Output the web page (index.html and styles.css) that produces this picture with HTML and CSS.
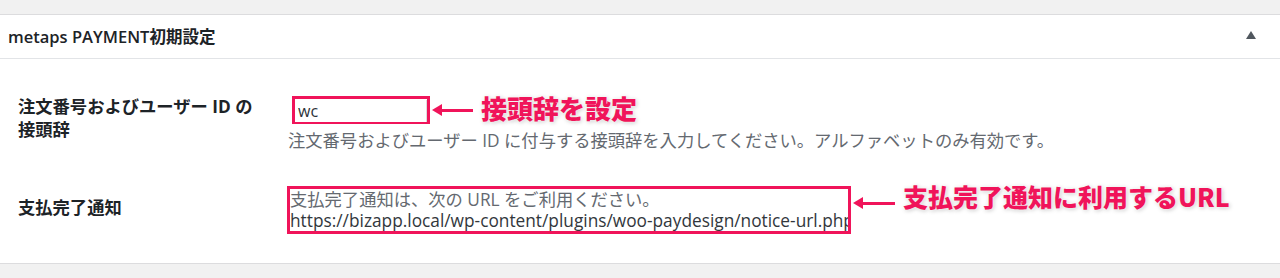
FILE: index.html
```html
<!DOCTYPE html>
<html lang="ja">
<head>
    <meta charset="UTF-8">
    <title>metaps PAYMENT初期設定</title>
    <link rel="stylesheet" href="styles.css">
</head>
<body>
    <div class="postbox">
        <div class="postbox-header">
            <h2>metaps PAYMENT初期設定</h2>
            <span class="toggle"></span>
        </div>
        <div class="inside">
            <div class="row row-prefix">
                <div class="label">注文番号およびユーザー ID の<br>接頭辞</div>
                <div class="field">
                    <div class="line">
                        <div class="mark mark-input">
                            <input type="text" value="wc">
                        </div>
                        <span class="arrow arrow-short"></span>
                        <span class="note note-small">接頭辞を設定</span>
                    </div>
                    <p class="desc">注文番号およびユーザー ID に付与する接頭辞を入力してください。アルファベットのみ有効です。</p>
                </div>
            </div>
            <div class="row row-notice">
                <div class="label">支払完了通知</div>
                <div class="field">
                    <div class="line line-top">
                        <div class="mark mark-text">
                            <p class="desc">支払完了通知は、次の URL をご利用ください。</p>
                            <p class="url">https://bizapp.local/wp-content/plugins/woo-paydesign/notice-url.php</p>
                        </div>
                        <span class="arrow arrow-long"></span>
                        <span class="note note-big">支払完了通知に利用するURL</span>
                    </div>
                </div>
            </div>
        </div>
    </div>
</body>
</html>
```

FILE: styles.css
```css
* {
    box-sizing: border-box;
    margin: 0;
    padding: 0;
}

body {
    background-color: #f1f1f1;
    font-family: "Open Sans", "Noto Sans CJK JP", sans-serif;
    font-size: 17.3px;
    color: #3c434a;
    padding-top: 14px;
}

.postbox {
    background-color: #fff;
    border-top: 1px solid #dcdcde;
    border-bottom: 1px solid #dcdcde;
    box-shadow: 0 1px 1px rgba(0, 0, 0, 0.04);
}

.postbox-header {
    display: flex;
    align-items: center;
    justify-content: space-between;
    height: 44px;
    border-bottom: 1px solid #e2e4e7;
    padding: 0 24px 0 8px;
}

.postbox-header h2 {
    font-size: 16.5px;
    font-weight: 600;
    color: #1d2327;
    margin-top: -2px;
}

.toggle {
    width: 0;
    height: 0;
    border-left: 5px solid transparent;
    border-right: 5px solid transparent;
    border-bottom: 8px solid #50575e;
    margin-top: -4px;
}

.inside {
    padding: 36px 0 0 18px;
    height: 204px;
}

.row {
    display: flex;
}

.label {
    width: 270px;
    font-weight: 700;
    color: #1d2327;
    line-height: 23px;
}

.row-notice {
    margin-top: 35px;
}

.row-notice .label {
    padding-top: 10px;
}

.line {
    display: flex;
    align-items: center;
}

.row-prefix .line {
    margin-top: 1px;
}

.mark {
    border: 3px solid #f0145a;
}

.mark-input {
    margin-left: 4px;
    width: 138px;
    height: 28px;
}

.mark-input input {
    width: 100%;
    height: 100%;
    border: 0;
    border-right: 1px solid #dcdcde;
    font-family: inherit;
    font-size: 16px;
    color: #2c3338;
    padding: 0 3px;
    outline: none;
}

.mark-text {
    width: 564px;
    margin-left: -1px;
    overflow: hidden;
    white-space: nowrap;
}

.desc {
    color: #646970;
    line-height: 21px;
}

.row-prefix .desc {
    margin-top: 6px;
}

.url {
    color: #32373c;
    line-height: 21px;
}

.arrow {
    position: relative;
    display: block;
    height: 3px;
    background-color: #f0145a;
    margin-left: 6px;
}

.arrow::before {
    content: "";
    position: absolute;
    left: -4px;
    top: -5px;
    border-top: 6px solid transparent;
    border-bottom: 6px solid transparent;
    border-right: 10px solid #f0145a;
}

.arrow-short {
    width: 37px;
}

.arrow-long {
    width: 38px;
    align-self: flex-start;
    margin-top: 16px;
}

.note {
    color: #f0145a;
    font-family: "Noto Sans CJK JP", sans-serif;
    font-weight: 900;
    text-shadow: 0 0 3px #fff, 1px 1px 4px rgba(0, 0, 0, 0.25);
    margin-left: 8px;
}

.note-small {
    font-size: 26px;
    line-height: 30px;
    margin-top: -4px;
}

.note-big {
    font-size: 25px;
    line-height: 30px;
    align-self: flex-start;
    margin-top: -5px;
}
```
